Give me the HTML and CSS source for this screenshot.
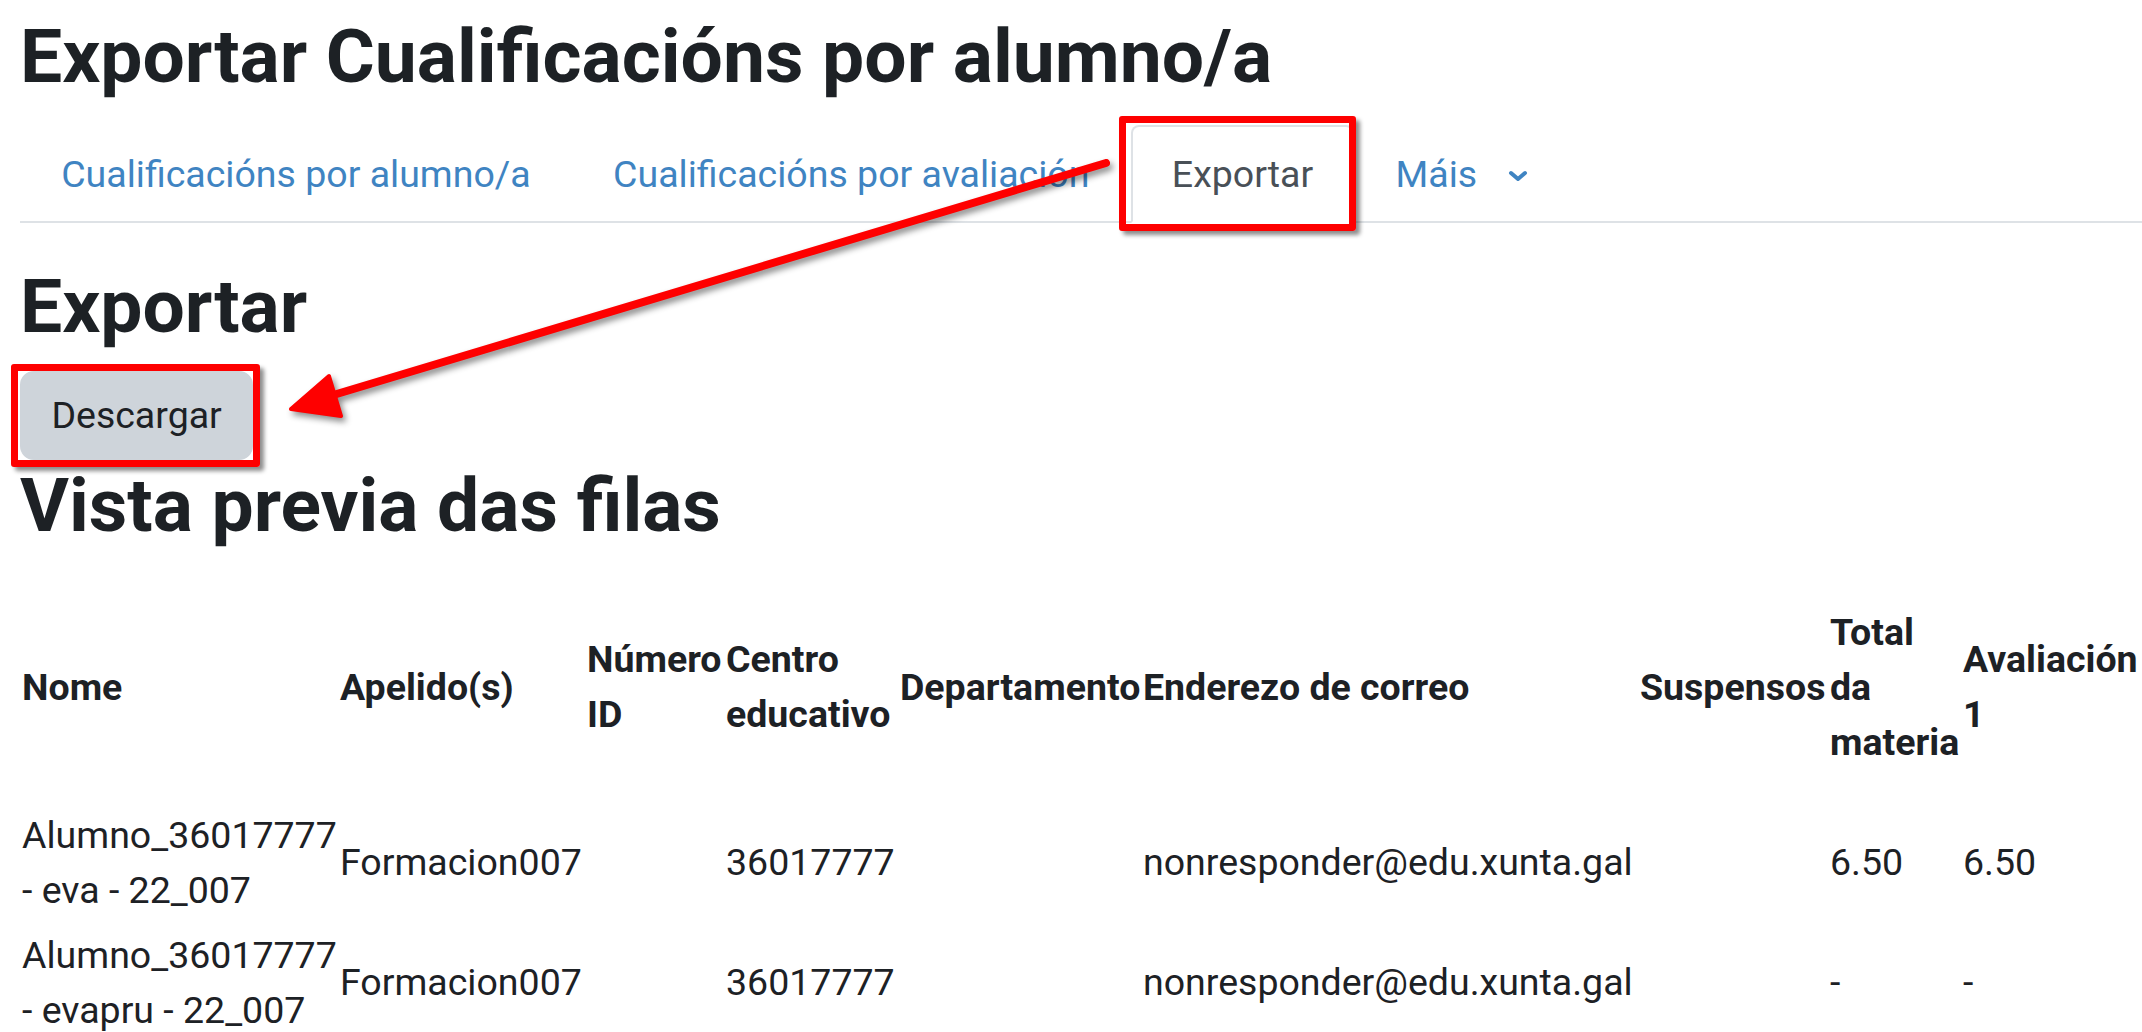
FILE: index.html
```html
<!DOCTYPE html>
<html lang="gl">
<head>
<meta charset="utf-8">
<title>Exportar Cualificacións por alumno/a</title>
<link rel="stylesheet" href="styles.css">
</head>
<body>
<div class="page">
  <h1 class="page-title">Exportar Cualificacións por alumno/a</h1>

  <ul class="tabs">
    <li class="tab"><a class="tab-link" href="#">Cualificacións por alumno/a</a></li>
    <li class="tab"><a class="tab-link" href="#">Cualificacións por avaliación</a></li>
    <li class="tab tab-current"><a class="tab-link active" href="#">Exportar</a><span class="annot-box annot-tab"></span></li>
    <li class="tab"><a class="tab-link more-link" href="#">Máis<svg class="chevron" viewBox="0 0 20 12" width="20" height="12"><polyline points="3,3 10,9 17,3" fill="none" stroke="currentColor" stroke-width="4" stroke-linecap="round" stroke-linejoin="round"/></svg></a></li>
  </ul>

  <h2 class="section-title">Exportar</h2>
  <div class="btn-row">
    <div class="btn-wrap">
      <button class="btn" type="button">Descargar</button>
      <span class="annot-box annot-btn"></span>
    </div>
  </div>

  <h2 class="section-title preview-title">Vista previa das filas</h2>

  <table class="preview">
    <colgroup>
      <col class="c-nome">
      <col class="c-apel">
      <col class="c-num">
      <col class="c-centro">
      <col class="c-dep">
      <col class="c-mail">
      <col class="c-susp">
      <col class="c-total">
      <col class="c-aval">
    </colgroup>
    <thead>
      <tr>
        <th>Nome</th>
        <th>Apelido(s)</th>
        <th>Número ID</th>
        <th>Centro educativo</th>
        <th>Departamento</th>
        <th>Enderezo de correo</th>
        <th>Suspensos</th>
        <th>Total da materia</th>
        <th>Avaliación 1</th>
      </tr>
    </thead>
    <tbody>
      <tr>
        <td>Alumno_36017777 - eva - 22_007</td>
        <td>Formacion007</td>
        <td></td>
        <td>36017777</td>
        <td></td>
        <td>nonresponder@edu.xunta.gal</td>
        <td></td>
        <td>6.50</td>
        <td>6.50</td>
      </tr>
      <tr>
        <td>Alumno_36017777 - evapru - 22_007</td>
        <td>Formacion007</td>
        <td></td>
        <td>36017777</td>
        <td></td>
        <td>nonresponder@edu.xunta.gal</td>
        <td></td>
        <td>-</td>
        <td>-</td>
      </tr>
    </tbody>
  </table>
</div>

<svg class="annot-arrow" width="2142" height="1032" viewBox="0 0 2142 1032">
  <line x1="1106" y1="163" x2="330" y2="396" stroke="#fe0000" stroke-width="8" stroke-linecap="round"/>
  <polygon points="291,409 329,376 341,416" fill="#fe0000" stroke="#fe0000" stroke-width="4" stroke-linejoin="round"/>
</svg>
</body>
</html>
```

FILE: styles.css
```css
html, body {
  margin: 0;
  padding: 0;
  background: #ffffff;
  overflow: hidden;
}

body {
  position: relative;
  width: 2142px;
  height: 1032px;
  font-family: Roboto, "Noto Sans", "Liberation Sans", sans-serif;
  font-size: 37.5px;
  line-height: 55px;
  color: #1d2125;
}

.page {
  padding-left: 20px;
}

.page-title,
.section-title {
  font-size: 75px;
  font-weight: 700;
  line-height: 90px;
  color: #1d2125;
  white-space: nowrap;
}

.page-title {
  margin: 11px 0 0;
}

.tabs {
  list-style: none;
  margin: 24px 0 0;
  padding: 0;
  display: flex;
  border-bottom: 2px solid #dee2e6;
}

.tab {
  position: relative;
  margin-bottom: -2px;
}

.tab-link {
  display: flex;
  align-items: center;
  padding: 19.6px 39.2px;
  border: 2px solid transparent;
  border-radius: 8px 8px 0 0;
  color: #3f84c2;
  text-decoration: none;
  white-space: nowrap;
}

.tab-link.active {
  color: #495057;
  background: #ffffff;
  border-color: #dee2e6 #dee2e6 #ffffff;
}

.chevron {
  margin-left: 31px;
  margin-top: 4px;
}

.annot-box {
  position: absolute;
  border: 7px solid #fe0000;
  border-radius: 3px;
  box-shadow: 4px 4px 4px rgba(0, 0, 0, 0.45);
  pointer-events: none;
}

.annot-tab {
  left: -12px;
  top: -9px;
  right: -2px;
  bottom: -8px;
}

.section-title {
  margin: 38px 0 20px;
}

.btn-row {
  display: flex;
}

.btn-wrap {
  position: relative;
}

.btn {
  display: block;
  font-family: inherit;
  font-size: 37.5px;
  line-height: 55px;
  color: #1d2125;
  background: #ced4da;
  border: 2px solid #ced4da;
  border-radius: 14px;
  padding: 14.7px 29.4px;
  margin: 0;
}

.annot-btn {
  left: -9px;
  top: -7px;
  right: -7px;
  bottom: -7px;
}

.preview-title {
  margin: 0 0 20px;
}

.preview {
  table-layout: fixed;
  border-collapse: collapse;
  width: 2119px;
}

.c-nome { width: 318px; }
.c-apel { width: 247px; }
.c-num { width: 139px; }
.c-centro { width: 174px; }
.c-dep { width: 243px; }
.c-mail { width: 497px; }
.c-susp { width: 190px; }
.c-total { width: 133px; }
.c-aval { width: 178px; }

.preview th,
.preview td {
  vertical-align: middle;
  text-align: left;
  padding: 5px 2px;
}

.preview th {
  font-weight: 700;
  padding-top: 35px;
  padding-bottom: 33px;
}

.annot-arrow {
  position: absolute;
  left: 0;
  top: 0;
  pointer-events: none;
  filter: drop-shadow(3px 4px 3px rgba(0, 0, 0, 0.45));
}
```
